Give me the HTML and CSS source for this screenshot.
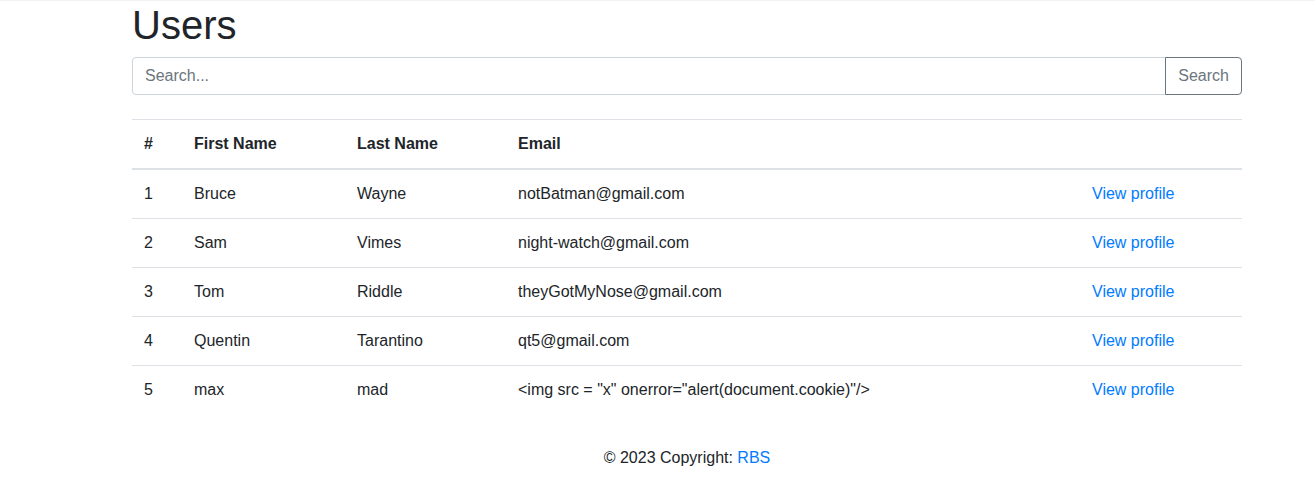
FILE: index.html
```html
<!DOCTYPE html>
<html lang="en">
<head>
<meta charset="utf-8">
<title>Users</title>
<link rel="stylesheet" href="styles.css">
</head>
<body>
<div class="topline"></div>
<main class="container">
  <h1 class="title">Users</h1>
  <form class="search-group">
    <input class="search-input" type="text" placeholder="Search...">
    <button class="search-btn" type="button">Search</button>
  </form>
  <table class="table">
    <colgroup>
      <col class="c1"><col class="c2"><col class="c3"><col class="c4"><col class="c5">
    </colgroup>
    <thead>
      <tr><th>#</th><th>First Name</th><th>Last Name</th><th>Email</th><th></th></tr>
    </thead>
    <tbody>
      <tr><td>1</td><td>Bruce</td><td>Wayne</td><td>notBatman@gmail.com</td><td><a class="link" href="#">View profile</a></td></tr>
      <tr><td>2</td><td>Sam</td><td>Vimes</td><td>night-watch@gmail.com</td><td><a class="link" href="#">View profile</a></td></tr>
      <tr><td>3</td><td>Tom</td><td>Riddle</td><td>theyGotMyNose@gmail.com</td><td><a class="link" href="#">View profile</a></td></tr>
      <tr><td>4</td><td>Quentin</td><td>Tarantino</td><td>qt5@gmail.com</td><td><a class="link" href="#">View profile</a></td></tr>
      <tr><td>5</td><td>max</td><td>mad</td><td>&lt;img src = "x" onerror="alert(document.cookie)"/&gt;</td><td><a class="link" href="#">View profile</a></td></tr>
    </tbody>
  </table>
  <footer class="footer">© 2023 Copyright: <a class="link" href="#">RBS</a></footer>
</main>
</body>
</html>
```
FILE: styles.css
```css
* { box-sizing: border-box; }
html, body { margin: 0; padding: 0; background: #fff; }
body {
  font-family: "Liberation Sans", Arial, sans-serif;
  font-size: 16px;
  line-height: 1.5;
  color: #212529;
}
.topline { height: 1px; background: #f1f2f4; }
.container { width: 1110px; margin-left: 132px; }
.title {
  margin: 0 0 8px;
  font-size: 40px;
  font-weight: 500;
  line-height: 1.2;
}
.search-group { display: flex; margin: 0 0 24px; }
.search-input {
  flex: 1;
  height: 38px;
  padding: 6px 12px;
  font: inherit;
  color: #495057;
  border: 1px solid #ced4da;
  border-radius: 4px 0 0 4px;
  outline: none;
}
.search-input::placeholder { color: #6c757d; opacity: 1; }
.search-btn {
  height: 38px;
  margin-left: -1px;
  padding: 6px 12px;
  font: inherit;
  color: #6c757d;
  background: transparent;
  border: 1px solid #6c757d;
  border-radius: 0 4px 4px 0;
}
.table {
  width: 100%;
  border-collapse: collapse;
  table-layout: fixed;
  margin-bottom: 16px;
}
.c1 { width: 50px; }
.c2 { width: 163px; }
.c3 { width: 161px; }
.c4 { width: 574px; }
.c5 { width: 162px; }
.table th, .table td {
  padding: 12px;
  text-align: left;
  vertical-align: top;
  border-top: 1px solid #dee2e6;
}
.table th { font-weight: 700; border-bottom: 2px solid #dee2e6; }
.link { color: #007bff; text-decoration: none; }
.footer { text-align: center; padding: 16px 0; }
```
